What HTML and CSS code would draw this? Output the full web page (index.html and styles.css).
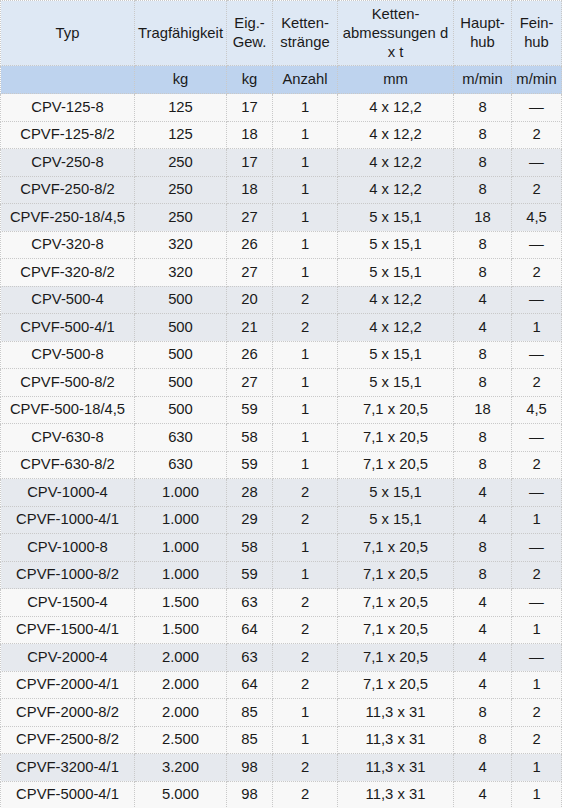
FILE: index.html
```html
<!DOCTYPE html>
<html lang="de">
<head>
<meta charset="utf-8">
<title>CPV Kettenzüge</title>
<link rel="stylesheet" href="styles.css">
</head>
<body>
<table class="spec">
<colgroup>
<col class="c1"><col class="c2"><col class="c3"><col class="c4"><col class="c5"><col class="c6"><col class="c7">
</colgroup>
<thead>
<tr class="head">
<th>Typ</th>
<th>Tragfähigkeit</th>
<th>Eig.-<br>Gew.</th>
<th>Ketten-<br>stränge</th>
<th>Ketten-<br>abmessungen d<br>x t</th>
<th>Haupt-<br>hub</th>
<th>Fein-<br>hub</th>
</tr>
<tr class="units">
<th></th><th>kg</th><th>kg</th><th>Anzahl</th><th>mm</th><th>m/min</th><th>m/min</th>
</tr>
</thead>
<tbody>
<tr class="w"><td>CPV-125-8</td><td>125</td><td>17</td><td>1</td><td>4 x 12,2</td><td>8</td><td>—</td></tr>
<tr class="w"><td>CPVF-125-8/2</td><td>125</td><td>18</td><td>1</td><td>4 x 12,2</td><td>8</td><td>2</td></tr>
<tr class="g"><td>CPV-250-8</td><td>250</td><td>17</td><td>1</td><td>4 x 12,2</td><td>8</td><td>—</td></tr>
<tr class="g"><td>CPVF-250-8/2</td><td>250</td><td>18</td><td>1</td><td>4 x 12,2</td><td>8</td><td>2</td></tr>
<tr class="g"><td>CPVF-250-18/4,5</td><td>250</td><td>27</td><td>1</td><td>5 x 15,1</td><td>18</td><td>4,5</td></tr>
<tr class="w"><td>CPV-320-8</td><td>320</td><td>26</td><td>1</td><td>5 x 15,1</td><td>8</td><td>—</td></tr>
<tr class="w"><td>CPVF-320-8/2</td><td>320</td><td>27</td><td>1</td><td>5 x 15,1</td><td>8</td><td>2</td></tr>
<tr class="g"><td>CPV-500-4</td><td>500</td><td>20</td><td>2</td><td>4 x 12,2</td><td>4</td><td>—</td></tr>
<tr class="g"><td>CPVF-500-4/1</td><td>500</td><td>21</td><td>2</td><td>4 x 12,2</td><td>4</td><td>1</td></tr>
<tr class="w"><td>CPV-500-8</td><td>500</td><td>26</td><td>1</td><td>5 x 15,1</td><td>8</td><td>—</td></tr>
<tr class="w"><td>CPVF-500-8/2</td><td>500</td><td>27</td><td>1</td><td>5 x 15,1</td><td>8</td><td>2</td></tr>
<tr class="w"><td>CPVF-500-18/4,5</td><td>500</td><td>59</td><td>1</td><td>7,1 x 20,5</td><td>18</td><td>4,5</td></tr>
<tr class="w"><td>CPV-630-8</td><td>630</td><td>58</td><td>1</td><td>7,1 x 20,5</td><td>8</td><td>—</td></tr>
<tr class="w"><td>CPVF-630-8/2</td><td>630</td><td>59</td><td>1</td><td>7,1 x 20,5</td><td>8</td><td>2</td></tr>
<tr class="g"><td>CPV-1000-4</td><td>1.000</td><td>28</td><td>2</td><td>5 x 15,1</td><td>4</td><td>—</td></tr>
<tr class="g"><td>CPVF-1000-4/1</td><td>1.000</td><td>29</td><td>2</td><td>5 x 15,1</td><td>4</td><td>1</td></tr>
<tr class="g"><td>CPV-1000-8</td><td>1.000</td><td>58</td><td>1</td><td>7,1 x 20,5</td><td>8</td><td>—</td></tr>
<tr class="g"><td>CPVF-1000-8/2</td><td>1.000</td><td>59</td><td>1</td><td>7,1 x 20,5</td><td>8</td><td>2</td></tr>
<tr class="w"><td>CPV-1500-4</td><td>1.500</td><td>63</td><td>2</td><td>7,1 x 20,5</td><td>4</td><td>—</td></tr>
<tr class="w"><td>CPVF-1500-4/1</td><td>1.500</td><td>64</td><td>2</td><td>7,1 x 20,5</td><td>4</td><td>1</td></tr>
<tr class="g"><td>CPV-2000-4</td><td>2.000</td><td>63</td><td>2</td><td>7,1 x 20,5</td><td>4</td><td>—</td></tr>
<tr class="w"><td>CPVF-2000-4/1</td><td>2.000</td><td>64</td><td>2</td><td>7,1 x 20,5</td><td>4</td><td>1</td></tr>
<tr class="w"><td>CPVF-2000-8/2</td><td>2.000</td><td>85</td><td>1</td><td>11,3 x 31</td><td>8</td><td>2</td></tr>
<tr class="w"><td>CPVF-2500-8/2</td><td>2.500</td><td>85</td><td>1</td><td>11,3 x 31</td><td>8</td><td>2</td></tr>
<tr class="g"><td>CPVF-3200-4/1</td><td>3.200</td><td>98</td><td>2</td><td>11,3 x 31</td><td>4</td><td>1</td></tr>
<tr class="w"><td>CPVF-5000-4/1</td><td>5.000</td><td>98</td><td>2</td><td>11,3 x 31</td><td>4</td><td>1</td></tr>
</tbody>
</table>
</body>
</html>
```

FILE: styles.css
```css
html, body {
  margin: 0;
  padding: 0;
  background: #ffffff;
}

.spec {
  border-collapse: collapse;
  table-layout: fixed;
  width: 562px;
  font-family: "Liberation Sans", Arial, sans-serif;
  font-size: 14.8px;
  color: #1a1a1a;
}

.c1 { width: 134px; }
.c2 { width: 92px; }
.c3 { width: 46px; }
.c4 { width: 65px; }
.c5 { width: 116px; }
.c6 { width: 58px; }
.c7 { width: 50px; }

.spec th,
.spec td {
  border: 1px dotted #c9c9c9;
  text-align: center;
  vertical-align: middle;
  font-weight: normal;
  padding: 0;
  white-space: nowrap;
}

.head th {
  background: #dee8f4;
  height: 65px;
  line-height: 19px;
  box-sizing: border-box;
}

.units th {
  background: #bed3ee;
  height: 28px;
  line-height: 17px;
  box-sizing: border-box;
}

.spec td {
  height: 27.5px;
  line-height: 17px;
  box-sizing: border-box;
}

.w td { background: #f8f8f8; }
.g td { background: #e6e9ee; }
```
